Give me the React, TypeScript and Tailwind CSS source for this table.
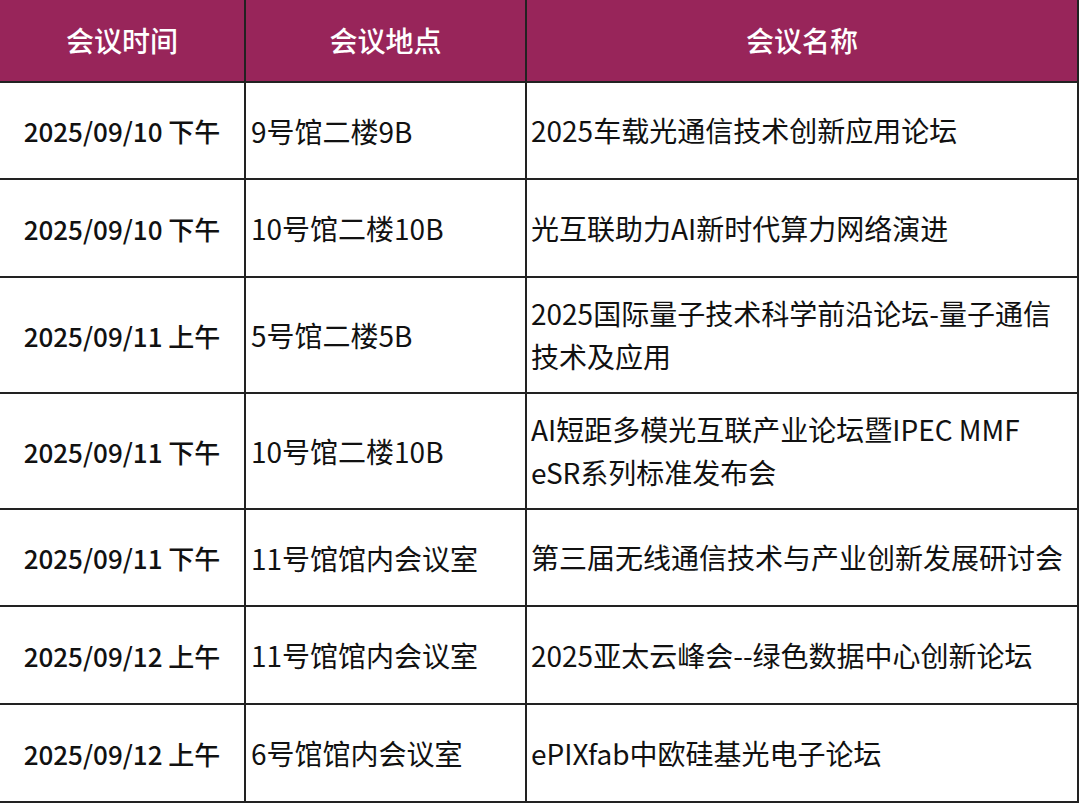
import React from "react";

const rows: { t: string; p: string; n: string[]; h: string }[] = [
  { t: "2025/09/10 下午", p: "9号馆二楼9B", n: ["2025车载光通信技术创新应用论坛"], h: "h-[97px]" },
  { t: "2025/09/10 下午", p: "10号馆二楼10B", n: ["光互联助力AI新时代算力网络演进"], h: "h-[98px]" },
  { t: "2025/09/11 上午", p: "5号馆二楼5B", n: ["2025国际量子技术科学前沿论坛-量子通信", "技术及应用"], h: "h-[116px]" },
  { t: "2025/09/11 下午", p: "10号馆二楼10B", n: ["AI短距多模光互联产业论坛暨IPEC MMF", "eSR系列标准发布会"], h: "h-[116px]" },
  { t: "2025/09/11 下午", p: "11号馆馆内会议室", n: ["第三届无线通信技术与产业创新发展研讨会"], h: "h-[97px]" },
  { t: "2025/09/12 上午", p: "11号馆馆内会议室", n: ["2025亚太云峰会--绿色数据中心创新论坛"], h: "h-[98px]" },
  { t: "2025/09/12 上午", p: "6号馆馆内会议室", n: ["ePIXfab中欧硅基光电子论坛"], h: "h-[98px]" },
];

export default function App() {
  return (
    <div
      className="w-[1080px] h-[804px] bg-white overflow-hidden text-[28px] text-[#111]"
      style={{ fontFamily: '"Noto Sans CJK SC", "Noto Sans", sans-serif' }}
    >
      <div className="w-[1079px] border-r-2 border-[#222]">
        <div className="flex h-[83px] bg-[#98255a] text-white font-medium border-b-2 border-[#222]">
          <div className="w-[246px] border-r-2 border-[#222] flex items-center justify-center pb-[2px]">会议时间</div>
          <div className="w-[281px] border-r-2 border-[#222] flex items-center justify-center pb-[2px]">会议地点</div>
          <div className="flex-1 flex items-center justify-center pb-[2px]">会议名称</div>
        </div>
        {rows.map((r, i) => (
          <div key={i} className={`flex ${r.h} border-b-2 border-[#222]`}>
            <div className="w-[246px] border-r-2 border-[#222] flex items-center justify-center font-medium text-[26px]">
              {r.t}
            </div>
            <div className="w-[281px] border-r-2 border-[#222] flex items-center pl-[5px]">{r.p}</div>
            <div className="flex-1 flex flex-col justify-center pl-[4px] leading-[43px]">
              {r.n.map((l, j) => (
                <div key={j} className="whitespace-nowrap">{l}</div>
              ))}
            </div>
          </div>
        ))}
      </div>
    </div>
  );
}
